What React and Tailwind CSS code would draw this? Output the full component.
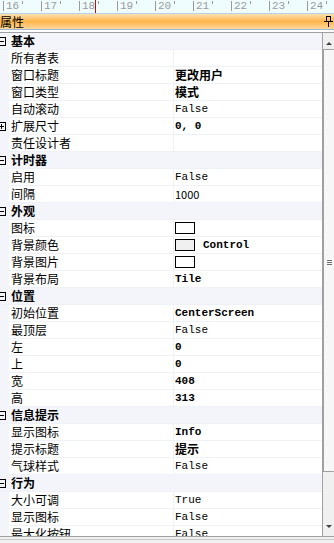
import React from 'react';

const cjk = "font-['SimSun','Noto_Sans_CJK_SC',sans-serif]";
const mono = "font-['Liberation_Mono','Noto_Sans_CJK_SC',monospace]";

const rows = [
  { cat: '基本' },
  { name: '所有者表', value: '' },
  { name: '窗口标题', value: '更改用户', bold: true, cjkVal: true },
  { name: '窗口类型', value: '模式', bold: true, cjkVal: true },
  { name: '自动滚动', value: 'False' },
  { name: '扩展尺寸', value: '0, 0', bold: true, plus: true },
  { name: '责任设计者', value: '' },
  { cat: '计时器' },
  { name: '启用', value: 'False' },
  { name: '间隔', value: '1000', sans: true },
  { cat: '外观' },
  { name: '图标', swatch: 'bg-white' },
  { name: '背景颜色', swatch: 'bg-[#f0f0f0]', value: 'Control', bold: true },
  { name: '背景图片', swatch: 'bg-white' },
  { name: '背景布局', value: 'Tile', bold: true },
  { cat: '位置' },
  { name: '初始位置', value: 'CenterScreen', bold: true },
  { name: '最顶层', value: 'False' },
  { name: '左', value: '0', bold: true },
  { name: '上', value: '0', bold: true },
  { name: '宽', value: '408', bold: true },
  { name: '高', value: '313', bold: true },
  { cat: '信息提示' },
  { name: '显示图标', value: 'Info', bold: true },
  { name: '提示标题', value: '提示', bold: true, cjkVal: true },
  { name: '气球样式', value: 'False' },
  { cat: '行为' },
  { name: '大小可调', value: 'True' },
  { name: '显示图标', value: 'False' },
  { name: '最大化按钮', value: 'False' },
];

const ticks = ['16', '17', '18', '19', '20', '21', '22', '23', '24'];

const Box = ({ plus }) => (
  <span className="relative ml-[-3px] w-[9px] h-[9px] border border-black flex-shrink-0">
    <span className="absolute left-[1px] right-[1px] top-[3px] h-px bg-black" />
    {plus && <span className="absolute top-[1px] bottom-[1px] left-[3px] w-px bg-black" />}
  </span>
);

const Row = ({ r }) => {
  if (r.cat) {
    return (
      <div className="h-[17px] flex-shrink-0 flex items-center bg-[#f3f5fa] border-b border-[#eef1f7]">
        <div className="w-[9px] flex items-center"><Box /></div>
        <span className={`${cjk} text-[12px] font-bold text-black pl-[2px] leading-[16px]`}>{r.cat}</span>
      </div>
    );
  }
  return (
    <div className="h-[17px] flex-shrink-0 flex bg-[#f3f5fa]">
      <div className="w-[9px] flex items-center">{r.plus && <Box plus />}</div>
      <div className={`w-[164px] bg-white border-b border-[#eef1f7] flex items-center pl-[2px] ${cjk} text-[12px] text-black leading-[16px]`}>
        {r.name}
      </div>
      <div className="flex-1 bg-white border-b border-l border-[#eef1f7] flex items-center pl-[1px] gap-[8px]">
        {r.swatch && <span className={`w-[20px] h-[12px] border border-black ${r.swatch}`} />}
        {r.value && (
          <span
            className={`${r.cjkVal || r.sans ? cjk : mono} ${r.sans ? "font-['Liberation_Sans',sans-serif] text-[11px]" : r.cjkVal ? 'text-[12px]' : 'text-[11px]'} ${r.bold ? 'font-bold' : ''} text-black leading-[16px]`}
          >
            {r.value}
          </span>
        )}
      </div>
    </div>
  );
};

export default function App() {
  return (
    <div className="w-[334px] h-[543px] overflow-hidden bg-white flex flex-col">
      {/* ruler */}
      <div className="relative h-[14px] bg-[#effdff] border-b border-[#b8d0ea] flex pl-[3px] flex-shrink-0">
        {ticks.map(t => (
          <div key={t} className={`w-[38px] flex-shrink-0 flex items-start ${mono} text-[11px] text-[#9a9a9a] leading-[12px]`}>
            <span className="w-px h-[10px] bg-[#9a9a9a] mt-[1px]" />
            <span className="ml-[2px]">{t}</span>
            <span className="w-px h-[3px] bg-[#9a9a9a] ml-[3px] mt-[1px]" />
          </div>
        ))}
        <span className="absolute left-[95px] top-0 w-px h-[13px] bg-[#e00000]" />
      </div>
      {/* title bar */}
      <div className="h-[16px] flex items-center justify-between bg-gradient-to-b from-[#ffe2ad] via-[#ffb548] to-[#ffd899] border-b border-[#9fb6d6] flex-shrink-0">
        <span className={`${cjk} text-[12px] text-black leading-[15px]`}>属性</span>
        <svg width="9" height="11" viewBox="0 0 9 11" className="mr-[1px]">
          <rect x="2.5" y="0.5" width="4" height="5" fill="none" stroke="#000" />
          <rect x="0" y="5" width="9" height="1" fill="#000" />
          <rect x="4" y="6" width="1" height="5" fill="#000" />
        </svg>
      </div>
      <div className="h-[2px] bg-white flex-shrink-0" />
      <div className="h-px bg-[#a0a0a0] flex-shrink-0" />
      {/* grid */}
      <div className="flex h-[503px] overflow-hidden flex-shrink-0">
        <div className="flex-1 flex flex-col border-r border-[#a0a0a0]">
          {rows.map((r, i) => <Row key={i} r={r} />)}
        </div>
        <div className="w-[11px] bg-[#f0f0f0] flex flex-col items-center">
          <div className="h-[16px] flex-shrink-0 flex items-end justify-center pb-[4px]">
            <span className="w-0 h-0 border-l-[3px] border-r-[3px] border-b-[3px] border-l-transparent border-r-transparent border-b-[#404040]" />
          </div>
          <div className="w-full h-[423px] flex-shrink-0 bg-[#f7f7f7] border border-[#a0a0a0] border-r-0 rounded-[1px] flex items-center justify-center">
            <div className="flex flex-col gap-[1px] mt-[4px]">
              <span className="w-[5px] h-px bg-[#707070]" />
              <span className="w-[5px] h-px bg-[#707070]" />
              <span className="w-[5px] h-px bg-[#707070]" />
            </div>
          </div>
          <div className="flex-1 flex items-end pb-[8px]">
            <span className="w-0 h-0 border-l-[3px] border-r-[3px] border-t-[3px] border-l-transparent border-r-transparent border-t-[#404040]" />
          </div>
        </div>
      </div>
      <div className="h-px bg-[#a0a0a0] flex-shrink-0" />
      <div className="h-[2px] bg-[#f0f0f0] flex-shrink-0" />
      <div className="h-px bg-[#c8c8c8] flex-shrink-0" />
      <div className="flex-1 bg-[#f0f0f0]" />
    </div>
  );
}
